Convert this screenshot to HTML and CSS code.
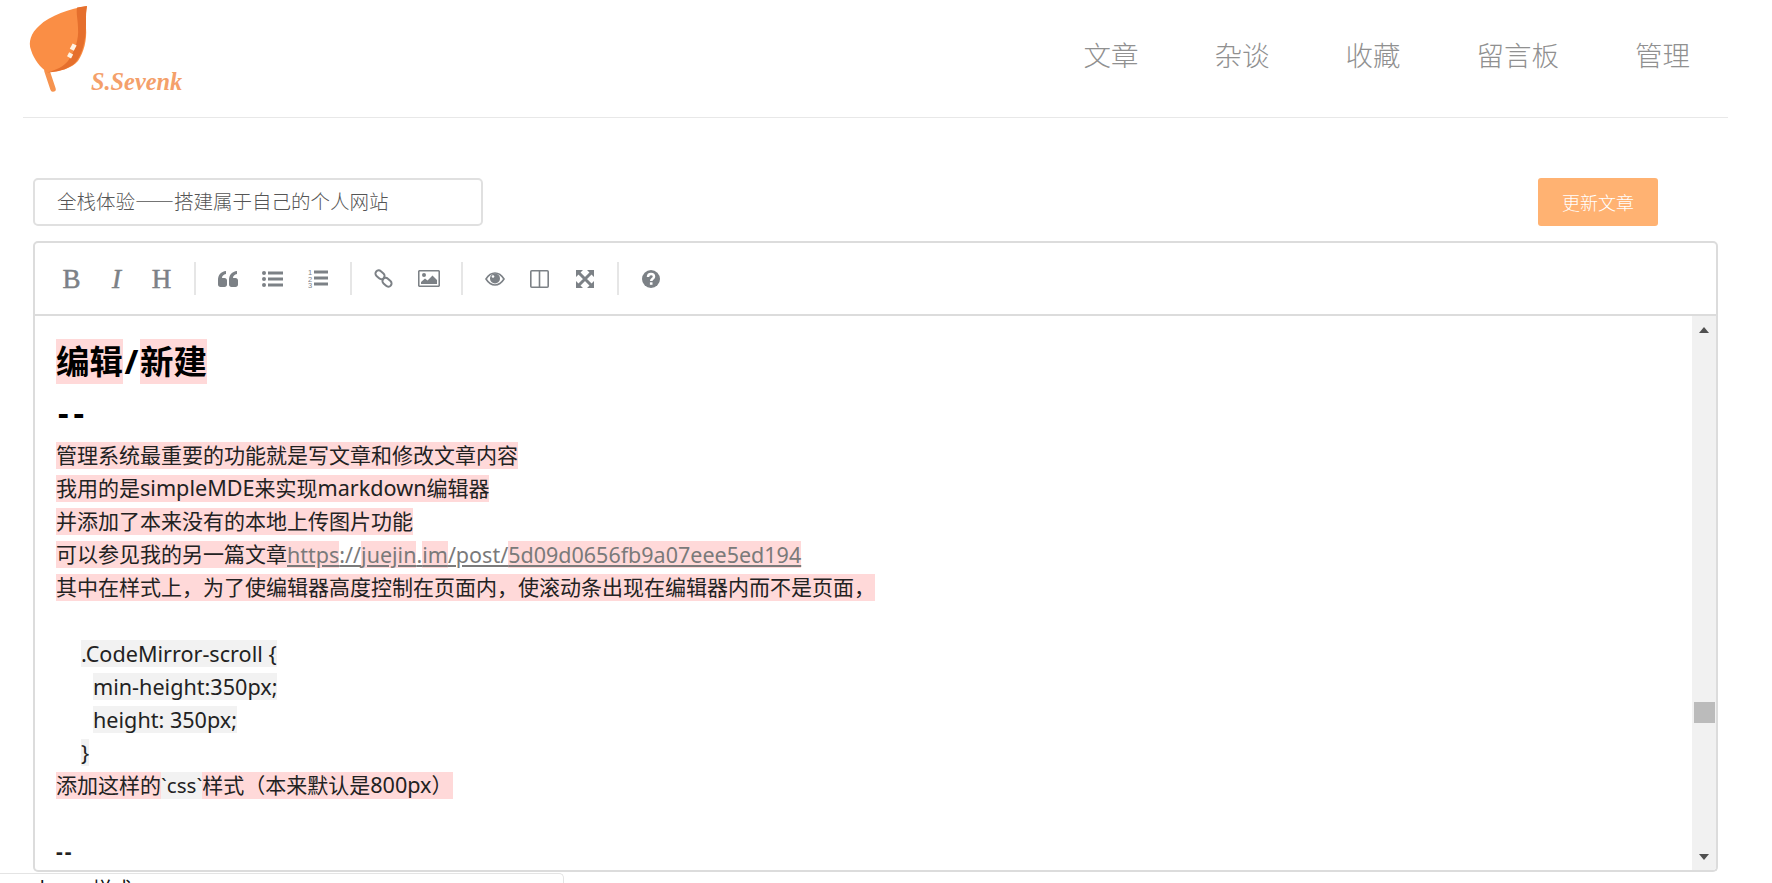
FILE: index.html
```html
<!DOCTYPE html>
<html lang="zh-CN">
<head>
<meta charset="utf-8">
<title>S.Sevenk</title>
<link rel="stylesheet" href="styles.css">
</head>
<body>
<header class="site-header">
  <a class="logo">
    <svg class="logo-leaf" viewBox="3 0 68 100" width="68" height="100" aria-hidden="true">
      <path class="stem" d="M27 71 L33 89"/>
      <path class="leaf" d="M67 6 C50 9 30 15 19 26 C11 33 8 42 11 50 C14 60 21 68 27 72 C40 72 52 68 58 61 C64 52 67 40 66 28 C65 20 66 12 67 6 Z"/>
      <path class="leaf-dark" d="M57 7.500 L67 6 C65 15 67 25 65 38 C63 50 60 58 54 64 C46 70 37 72 27 72.500 C37 70 44 66 48 61 C55 51 59 39 58 28 C58 20 56 14 57 7.500 Z"/>
      <rect class="leaf-dot" x="51" y="44" width="4.500" height="6" transform="rotate(28 53 47)"/>
      <rect class="leaf-dot" x="48" y="53" width="4.500" height="4.500" transform="rotate(28 50 55)"/>
    </svg>
    <span class="logo-text">S.Sevenk</span>
  </a>
  <nav class="site-nav">
    <a>文章</a><a>杂谈</a><a>收藏</a><a>留言板</a><a>管理</a>
  </nav>
</header>

<main class="page">
  <div class="title-row">
    <input class="title-input" type="text" value="全栈体验——搭建属于自己的个人网站">
    <button class="btn-save" type="button">更新文章</button>
  </div>

  <section class="editor">
    <div class="toolbar">
      <button class="tool tool-text" type="button">B</button>
      <button class="tool tool-text tool-i" type="button">I</button>
      <button class="tool tool-text" type="button">H</button>
      <i class="sep"></i>
      <button class="tool" type="button">
        <svg viewBox="0 0 20 16" width="20" height="16"><path d="M0 9 C0 4 3 .5 8 0 V3 C5.500 3.500 4 5 4 7 H6.500 C8 7 9 8 9 9.500 V13.500 C9 15 8 16 6.500 16 H2.500 C1 16 0 15 0 13.500 Z"/><path d="M11 9 C11 4 14 .5 19 0 V3 C16.500 3.500 15 5 15 7 H17.500 C19 7 20 8 20 9.500 V13.500 C20 15 19 16 17.500 16 H13.500 C12 16 11 15 11 13.500 Z"/></svg>
      </button>
      <button class="tool" type="button">
        <svg viewBox="0 0 21 16" width="21" height="16"><circle cx="2" cy="2" r="2"/><circle cx="2" cy="8" r="2"/><circle cx="2" cy="14" r="2"/><rect x="6" y=".5" width="15" height="3"/><rect x="6" y="6.500" width="15" height="3"/><rect x="6" y="12.500" width="15" height="3"/></svg>
      </button>
      <button class="tool" type="button">
        <svg viewBox="0 0 20 20" width="20" height="20"><text class="ol-num" x="0" y="6">1</text><text class="ol-num" x="0" y="12.500">2</text><text class="ol-num" x="0" y="19">3</text><rect x="6" y="1.500" width="14" height="3"/><rect x="6" y="7.500" width="14" height="3"/><rect x="6" y="13.500" width="14" height="3"/></svg>
      </button>
      <i class="sep"></i>
      <button class="tool" type="button">
        <svg class="line-icon" viewBox="0 0 19 19" width="19" height="19"><rect x="1" y="2.500" width="10" height="6.500" rx="3.250" transform="rotate(42 6 5.750)"/><rect x="8" y="10" width="10" height="6.500" rx="3.250" transform="rotate(42 13 13.250)"/></svg>
      </button>
      <button class="tool" type="button">
        <svg viewBox="0 0 22 17" width="22" height="17"><rect class="outline" x=".75" y=".75" width="20.500" height="15.500" rx="1"/><circle cx="6" cy="5" r="2"/><path d="M3 14 V12 L7 8.500 L9.500 10.500 L14.500 5.500 L19 10 V14 Z"/></svg>
      </button>
      <i class="sep"></i>
      <button class="tool" type="button">
        <svg viewBox="0 0 20 14" width="20" height="14"><path class="outline" d="M1 7 C3.500 3 6.500 1 10 1 S16.500 3 19 7 C16.500 11 13.500 13 10 13 S3.500 11 1 7 Z"/><circle cx="10" cy="6.500" r="5"/><circle class="spark" cx="8" cy="4.500" r="1.300"/></svg>
      </button>
      <button class="tool" type="button">
        <svg viewBox="0 0 19 18" width="19" height="18"><rect class="outline" x=".8" y=".8" width="17.400" height="16.400" rx="1"/><rect x="8.700" y="1" width="1.600" height="16"/></svg>
      </button>
      <button class="tool" type="button">
        <svg viewBox="0 0 18 18" width="18" height="18"><path d="M0 0 H7 L0 7 Z M18 0 V7 L11 0 Z M0 18 V11 L7 18 Z M18 18 H11 L18 11 Z"/><path class="cross" d="M3 3 L15 15 M15 3 L3 15"/></svg>
      </button>
      <i class="sep"></i>
      <button class="tool" type="button">
        <svg viewBox="0 0 18 18" width="18" height="18"><circle cx="9" cy="9" r="9"/><path class="q-mark" d="M6 7 C6 5 7.300 4 9 4 C10.800 4 12 5.100 12 6.700 C12 8.800 9.200 8.800 9.200 11"/><rect class="spark" x="7.900" y="12.300" width="2.600" height="2.500"/></svg>
      </button>
    </div>

    <div class="cm-body">
      <div class="cm-lines">
        <div class="ln ln-h1"><span class="err">编辑</span><span class="slash">/</span><span class="err">新建</span></div>
        <div class="ln ln-rule"><span>--</span></div>
        <div class="ln"><span class="err">管理系统最重要的功能就是写文章和修改文章内容</span></div>
        <div class="ln"><span class="err">我用的是<b class="lat">simpleMDE</b>来实现<b class="lat">markdown</b>编辑器</span></div>
        <div class="ln"><span class="err">并添加了本来没有的本地上传图片功能</span></div>
        <div class="ln"><span class="err">可以参见我的另一篇文章</span><span class="err url">https</span><span class="url">://</span><span class="err url">juejin</span><span class="url">.</span><span class="err url">im</span><span class="url">/post/</span><span class="err url">5d09d0656fb9a07eee5ed194</span></div>
        <div class="ln"><span class="err">其中在样式上，为了使编辑器高度控制在页面内，使滚动条出现在编辑器内而不是页面，</span></div>
        <div class="ln"></div>
        <div class="ln indent-4"><span class="code">.CodeMirror-scroll {</span></div>
        <div class="ln indent-6"><span class="code">min-height:350px;</span></div>
        <div class="ln indent-6"><span class="code">height: 350px;</span></div>
        <div class="ln indent-4"><span class="code">}</span></div>
        <div class="ln"><span class="err">添加这样的</span><span class="code code-inline">`css`</span><span class="err">样式（本来默认是<b class="lat">800px</b>）</span></div>
        <div class="ln"></div>
        <div class="ln ln-dash"><span>--</span></div>
      </div>
      <div class="scrollbar">
        <i class="arrow arrow-up"></i>
        <i class="thumb"></i>
        <i class="arrow arrow-down"></i>
      </div>
    </div>
  </section>

  <div class="tag-box"><span>卜</span><span class="tag-label">样式</span></div>
</main>
</body>
</html>
```

FILE: styles.css
```css
* { box-sizing: border-box; }

html, body {
  margin: 0;
  height: 883px;
  overflow: hidden;
  background: #fff;
}

body {
  font-family: "Noto Sans", "Noto Sans CJK SC", sans-serif;
  color: #111;
}

.site-header {
  display: flex;
  justify-content: space-between;
  align-items: center;
  height: 118px;
  margin: 0 44px 0 23px;
  padding-right: 38px;
  border-bottom: 1px solid #e8e8e8;
}

.logo {
  display: flex;
  align-items: flex-end;
  align-self: flex-start;
}

.logo-leaf { display: block; }
.logo-leaf .leaf { fill: #fa8e45; }
.logo-leaf .leaf-dark { fill: #e56f2d; }
.logo-leaf .leaf-dot { fill: #fff3e4; }
.logo-leaf .stem { fill: none; stroke: #f6934f; stroke-width: 5.500; stroke-linecap: round; }

.logo-text {
  font: italic bold 24.300px/24px "Liberation Serif", serif;
  color: #f4a06a;
  padding-bottom: 6px;
}

.site-nav {
  display: flex;
  gap: 76px;
  font-family: "Noto Sans CJK SC", sans-serif;
  font-size: 27.500px;
  font-weight: 300;
  line-height: 36px;
  color: #909090;
  margin-bottom: 10px;
}

.page { padding: 60px 54px 0 33px; }

.title-row {
  display: flex;
  justify-content: space-between;
  align-items: center;
  padding-right: 60px;
}

.title-input {
  width: 450px;
  height: 48px;
  padding: 0 21px 3px 22px;
  border: 2px solid #e0e0e0;
  border-radius: 5px;
  font-family: "Noto Sans CJK SC", sans-serif;
  font-size: 19.500px;
  font-weight: 300;
  color: #555;
  background: #fff;
  outline: none;
}

.btn-save {
  width: 120px;
  height: 48px;
  border: 0;
  border-radius: 3px;
  background: #ffb272;
  color: #fff;
  font-family: "Noto Sans CJK SC", sans-serif;
  font-size: 18px;
  font-weight: 300;
}

.editor { margin-top: 15px; }

.toolbar {
  display: flex;
  align-items: center;
  height: 75px;
  padding-left: 14px;
  border: 2px solid #dcdcdc;
  border-radius: 5px 5px 0 0;
}

.tool {
  display: flex;
  align-items: center;
  justify-content: center;
  width: 45px;
  height: 34px;
  padding: 0;
  border: 0;
  background: none;
  color: #7c8186;
}

.tool svg { display: block; fill: #7c8186; }

.tool-text {
  font: 27px/34px "Liberation Serif", serif;
  -webkit-text-stroke: 0.5px #7c8186;
}

.tool-i { font-style: italic; }

.sep {
  width: 2px;
  height: 33px;
  margin: 0 9.500px;
  background: #e6e6e6;
}

.tool .outline { fill: none; stroke: #7c8186; stroke-width: 1.600; }
.tool .spark { fill: #fff; }
.tool .line-icon { fill: none; stroke: #7c8186; stroke-width: 2; }
.tool .line-icon rect { fill: none; }
.tool .cross { fill: none; stroke: #7c8186; stroke-width: 3; }
.tool .q-mark { fill: none; stroke: #fff; stroke-width: 2.500; }
.tool .ol-num { font: 7.500px "Liberation Sans", sans-serif; }

.cm-body {
  display: flex;
  height: 556px;
  border: 2px solid #dcdcdc;
  border-top: 0;
  border-radius: 0 0 5px 5px;
  overflow: hidden;
}

.cm-lines {
  flex: 1;
  padding: 23px 0 0 21px;
  font-size: 21px;
  color: #222;
  overflow: hidden;
}

.ln {
  display: flex;
  align-items: flex-start;
  height: 33px;
  white-space: pre;
}

.ln > span {
  display: block;
  height: 27px;
  line-height: 27px;
}

.lat { font-size: 21.600px; font-weight: 400; line-height: 1; }

.ln-h1 { height: 45px; font-size: 33.500px; font-weight: 700; color: #000; }
.ln-h1 > span { height: 45px; line-height: 45px; }
.ln-h1 > .slash { padding: 0 1.500px; }

.ln-rule { height: 58px; font-size: 33px; font-weight: 700; color: #000; }
.ln-rule > span { height: 58px; line-height: 58px; padding-left: 2px; letter-spacing: 5px; }

.ln-dash > span { font-weight: 700; letter-spacing: 2px; }

.err { background: rgba(255, 0, 0, 0.15); }
.code { background: rgba(0, 0, 0, 0.05); font-size: 21.600px; }
.code-inline { font-size: 20.600px; }
.url { color: #7a7a7a; text-decoration: underline; font-size: 21.500px; }
.indent-4 { padding-left: 25px; }
.indent-6 { padding-left: 37px; }

.scrollbar {
  position: relative;
  display: flex;
  flex-direction: column;
  justify-content: space-between;
  align-items: center;
  width: 24px;
  padding: 11px 0 10px;
  background: #f1f1f1;
}

.arrow { width: 0; height: 0; border-left: 5px solid transparent; border-right: 5px solid transparent; }
.arrow-up { border-bottom: 6px solid #505050; }
.arrow-down { border-top: 6px solid #505050; }

.thumb {
  position: absolute;
  left: 2px;
  right: 1px;
  top: 386px;
  height: 21px;
  background: #bbb;
}

.tag-box {
  display: flex;
  width: 564px;
  height: 10px;
  margin: 1px 0 0 -33px;
  padding: 0 0 0 34px;
  border: 1px solid #e4e4e4;
  border-bottom: 0;
  border-left: 0;
  border-radius: 0 5px 0 0;
  font-family: "Noto Sans CJK SC", sans-serif;
  font-size: 20px;
  line-height: 30px;
  overflow: hidden;
}

.tag-label { margin-left: 38px; }
```
